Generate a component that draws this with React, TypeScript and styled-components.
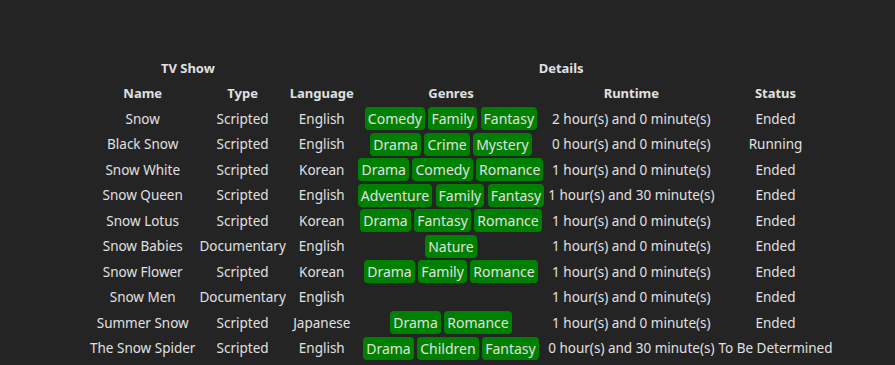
import React from 'react';
import styled, { createGlobalStyle } from 'styled-components';

type Show = {
  name: string;
  type: string;
  language: string;
  genres: string[];
  hours: number;
  minutes: number;
  status: string;
};

const shows: Show[] = [
  { name: 'Snow', type: 'Scripted', language: 'English', genres: ['Comedy', 'Family', 'Fantasy'], hours: 2, minutes: 0, status: 'Ended' },
  { name: 'Black Snow', type: 'Scripted', language: 'English', genres: ['Drama', 'Crime', 'Mystery'], hours: 0, minutes: 0, status: 'Running' },
  { name: 'Snow White', type: 'Scripted', language: 'Korean', genres: ['Drama', 'Comedy', 'Romance'], hours: 1, minutes: 0, status: 'Ended' },
  { name: 'Snow Queen', type: 'Scripted', language: 'English', genres: ['Adventure', 'Family', 'Fantasy'], hours: 1, minutes: 30, status: 'Ended' },
  { name: 'Snow Lotus', type: 'Scripted', language: 'Korean', genres: ['Drama', 'Fantasy', 'Romance'], hours: 1, minutes: 0, status: 'Ended' },
  { name: 'Snow Babies', type: 'Documentary', language: 'English', genres: ['Nature'], hours: 1, minutes: 0, status: 'Ended' },
  { name: 'Snow Flower', type: 'Scripted', language: 'Korean', genres: ['Drama', 'Family', 'Romance'], hours: 1, minutes: 0, status: 'Ended' },
  { name: 'Snow Men', type: 'Documentary', language: 'English', genres: [], hours: 1, minutes: 0, status: 'Ended' },
  { name: 'Summer Snow', type: 'Scripted', language: 'Japanese', genres: ['Drama', 'Romance'], hours: 1, minutes: 0, status: 'Ended' },
  { name: 'The Snow Spider', type: 'Scripted', language: 'English', genres: ['Drama', 'Children', 'Fantasy'], hours: 0, minutes: 30, status: 'To Be Determined' },
];

const GlobalStyle = createGlobalStyle`
  html, body {
    margin: 0;
    padding: 0;
    background: #242424;
  }
  body {
    font-family: "Noto Sans", "DejaVu Sans", sans-serif;
    color: #e0e0e0;
  }
`;

const Page = styled.main`
  padding: 54px 0 0 87px;
  min-height: 365px;
  box-sizing: border-box;
`;

const Table = styled.table`
  border-collapse: separate;
  border-spacing: 2px;
  font-size: 13.5px;
`;

const Row = styled.tr`
  height: 23.5px;
`;

const HeadCell = styled.th`
  padding: 0 1px;
  font-size: 13px;
  font-weight: 700;
  text-align: center;
  white-space: nowrap;
`;

const Cell = styled.td`
  padding: 0 1px;
  text-align: center;
  white-space: nowrap;
`;

const Badge = styled.span`
  display: inline-block;
  padding: 2px 3px;
  font-size: 14px;
  line-height: 19px;
  border-radius: 4px;
  background: #008000;
  color: #e0e0e0;
`;

const App = () => {
  return (
    <>
      <GlobalStyle />
      <Page>
        <Table>
          <thead>
            <Row>
              <HeadCell colSpan={2}>TV Show</HeadCell>
              <HeadCell colSpan={4}>Details</HeadCell>
            </Row>
            <Row>
              <HeadCell>Name</HeadCell>
              <HeadCell>Type</HeadCell>
              <HeadCell>Language</HeadCell>
              <HeadCell>Genres</HeadCell>
              <HeadCell>Runtime</HeadCell>
              <HeadCell>Status</HeadCell>
            </Row>
          </thead>
          <tbody>
            {shows.map((s) => (
              <Row key={s.name}>
                <Cell>{s.name}</Cell>
                <Cell>{s.type}</Cell>
                <Cell>{s.language}</Cell>
                <Cell>
                  {s.genres.map((g, i) => (
                    <React.Fragment key={g}>
                      {i > 0 && ' '}
                      <Badge>{g}</Badge>
                    </React.Fragment>
                  ))}
                </Cell>
                <Cell>
                  {s.hours} hour(s) and {s.minutes} minute(s)
                </Cell>
                <Cell>{s.status}</Cell>
              </Row>
            ))}
          </tbody>
        </Table>
      </Page>
    </>
  );
};

export default App;
